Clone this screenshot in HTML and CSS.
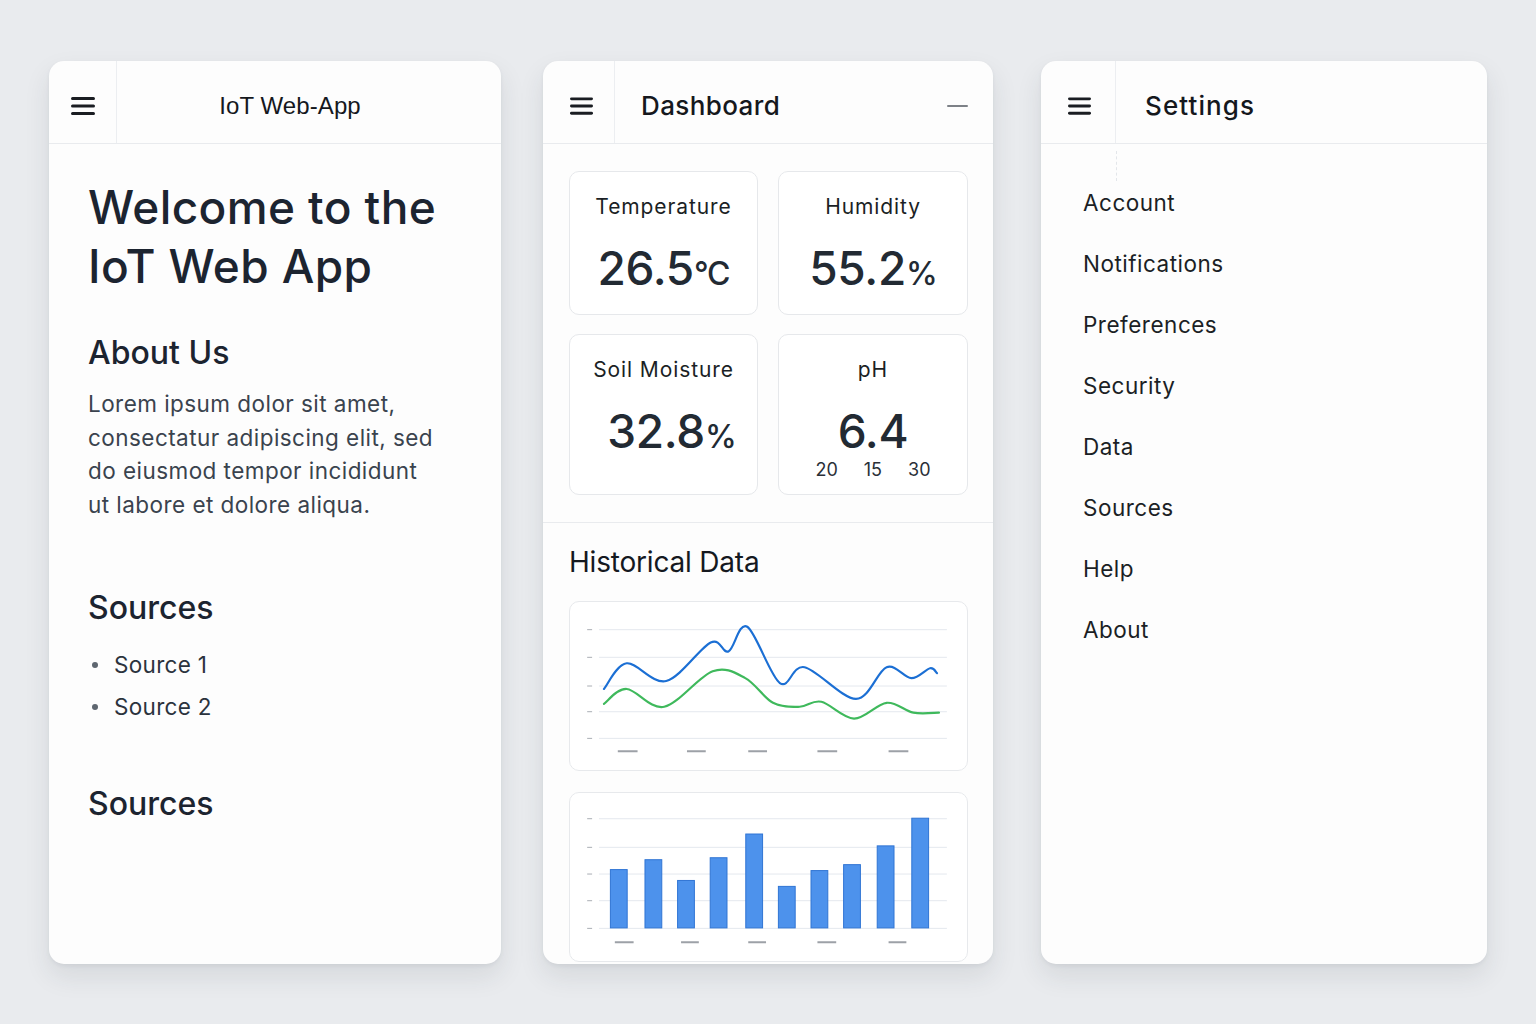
FILE: index.html
```html
<!DOCTYPE html>
<html lang="en">
<head>
<meta charset="utf-8">
<title>IoT Web-App</title>
<link rel="stylesheet" href="styles.css">
</head>
<body>
<div class="stage">

  <section class="panel panel-home">
    <header class="bar">
      <div class="menu-cell menu-cell-home">
        <svg class="burger" viewBox="0 0 24 20" width="24" height="20"><rect x="0" y="1" width="24" height="3" rx="1.5"/><rect x="0" y="8.5" width="24" height="3" rx="1.5"/><rect x="0" y="16" width="24" height="3" rx="1.5"/></svg>
      </div>
      <div class="bar-title bar-title-home">IoT Web-App</div>
    </header>
    <div class="home-body">
      <h1 class="welcome">Welcome to the<br>IoT Web App</h1>
      <h2 class="sub about">About Us</h2>
      <p class="lorem">Lorem ipsum dolor sit amet,<br>consectatur adipiscing elit, sed<br>do eiusmod tempor incididunt<br>ut labore et dolore aliqua.</p>
      <h2 class="sub sources1">Sources</h2>
      <ul class="src-list">
        <li>Source 1</li>
        <li>Source 2</li>
      </ul>
      <h2 class="sub sources2">Sources</h2>
    </div>
  </section>

  <section class="panel panel-dash">
    <header class="bar">
      <div class="menu-cell menu-cell-dash">
        <svg class="burger" viewBox="0 0 24 20" width="23" height="20"><rect x="0" y="1" width="24" height="3" rx="1.5"/><rect x="0" y="8.5" width="24" height="3" rx="1.5"/><rect x="0" y="16" width="24" height="3" rx="1.5"/></svg>
      </div>
      <div class="bar-title bar-title-dash">Dashboard</div>
      <div class="minus"></div>
    </header>
    <div class="cards">
      <div class="card">
        <div class="card-label">Temperature</div>
        <div class="card-value">26.5<span class="unit">°C</span></div>
      </div>
      <div class="card">
        <div class="card-label">Humidity</div>
        <div class="card-value">55.2<span class="unit">%</span></div>
      </div>
      <div class="card">
        <div class="card-label">Soil Moisture</div>
        <div class="card-value shift">32.8<span class="unit">%</span></div>
      </div>
      <div class="card">
        <div class="card-label">pH</div>
        <div class="card-value">6.4</div>
        <div class="card-sub"><span>20</span><span>15</span><span>30</span></div>
      </div>
    </div>
    <div class="history">
      <h3 class="history-title">Historical Data</h3>
      <div class="chart">
        <svg viewBox="0 0 400 170" width="398" height="168">
          <g class="grid">
            <line x1="28" y1="28" x2="380" y2="28"/>
            <line x1="28" y1="56" x2="380" y2="56"/>
            <line x1="28" y1="85" x2="380" y2="85"/>
            <line x1="28" y1="111" x2="380" y2="111"/>
            <line x1="28" y1="138" x2="380" y2="138"/>
          </g>
          <g class="ticks">
            <line x1="16" y1="28" x2="21" y2="28"/>
            <line x1="16" y1="56" x2="21" y2="56"/>
            <line x1="16" y1="85" x2="21" y2="85"/>
            <line x1="16" y1="111" x2="21" y2="111"/>
            <line x1="16" y1="138" x2="21" y2="138"/>
          </g>
          <g class="xlabels">
            <line x1="47" y1="151" x2="67" y2="151"/>
            <line x1="117" y1="151" x2="136" y2="151"/>
            <line x1="179" y1="151" x2="198" y2="151"/>
            <line x1="249" y1="151" x2="269" y2="151"/>
            <line x1="321" y1="151" x2="341" y2="151"/>
          </g>
          <path class="line-green" d="M33,103 C36.8,100.5 45.8,87.5 56,88 C66.2,88.5 79.5,109 94,106 C108.5,103 129.3,74.8 143,70 C156.7,65.2 165.8,71.7 176,77 C186.2,82.3 194.8,97.2 204,102 C213.2,106.8 222.8,106.2 231,106 C239.2,105.8 243.8,99 253,101 C262.2,103 275,117.8 286,118 C297,118.2 309,103 319,102 C329,101 337.2,110.3 346,112 C354.8,113.7 367.7,112 372,112"/>
          <path class="line-blue" d="M33,88 C36.8,83.7 45.5,63.3 56,62 C66.5,60.7 81.8,83.5 96,80 C110.2,76.5 130.5,46 141,41 C151.5,36 152.8,52.7 159,50 C165.2,47.3 169.3,19.7 178,25 C186.7,30.3 201.3,75.2 211,82 C220.7,88.8 223.2,63.3 236,66 C248.8,68.7 274.2,98 288,98 C301.8,98 309.7,69.5 319,66 C328.3,62.5 336.7,76.8 344,77 C351.3,77.2 358.7,67.8 363,67 C367.3,66.2 368.8,71.2 370,72"/>
        </svg>
      </div>
      <div class="chart chart-bars">
        <svg viewBox="0 0 400 170" width="398" height="168">
          <g class="grid">
            <line x1="28" y1="26" x2="380" y2="26"/>
            <line x1="28" y1="55" x2="380" y2="55"/>
            <line x1="28" y1="82" x2="380" y2="82"/>
            <line x1="28" y1="109" x2="380" y2="109"/>
            <line x1="28" y1="137" x2="380" y2="137"/>
          </g>
          <g class="ticks">
            <line x1="16" y1="26" x2="21" y2="26"/>
            <line x1="16" y1="55" x2="21" y2="55"/>
            <line x1="16" y1="82" x2="21" y2="82"/>
            <line x1="16" y1="109" x2="21" y2="109"/>
            <line x1="16" y1="137" x2="21" y2="137"/>
          </g>
          <g class="bars">
            <rect x="39.5" y="77.5" width="17" height="59"/>
            <rect x="74.5" y="67.5" width="17" height="69"/>
            <rect x="107.5" y="88.5" width="17" height="48"/>
            <rect x="140.5" y="65.5" width="17" height="71"/>
            <rect x="176.5" y="41.5" width="17" height="95"/>
            <rect x="209.5" y="94.5" width="17" height="42"/>
            <rect x="242.5" y="78.5" width="17" height="58"/>
            <rect x="275.5" y="72.5" width="17" height="64"/>
            <rect x="309.5" y="53.5" width="17" height="83"/>
            <rect x="344.5" y="25.5" width="17" height="111"/>
          </g>
          <g class="xlabels">
            <line x1="44" y1="151" x2="63" y2="151"/>
            <line x1="111" y1="151" x2="129" y2="151"/>
            <line x1="179" y1="151" x2="197" y2="151"/>
            <line x1="249" y1="151" x2="268" y2="151"/>
            <line x1="321" y1="151" x2="339" y2="151"/>
          </g>
        </svg>
      </div>
    </div>
  </section>

  <section class="panel panel-settings">
    <header class="bar">
      <div class="menu-cell menu-cell-settings">
        <svg class="burger" viewBox="0 0 24 20" width="23" height="20"><rect x="0" y="1" width="24" height="3" rx="1.5"/><rect x="0" y="8.5" width="24" height="3" rx="1.5"/><rect x="0" y="16" width="24" height="3" rx="1.5"/></svg>
      </div>
      <div class="bar-title bar-title-settings">Settings</div>
    </header>
    <ul class="settings-list">
      <li>Account</li>
      <li>Notifications</li>
      <li>Preferences</li>
      <li>Security</li>
      <li>Data</li>
      <li>Sources</li>
      <li>Help</li>
      <li>About</li>
    </ul>
  </section>

</div>
</body>
</html>
```

FILE: styles.css
```css
* { box-sizing: border-box; }

html, body {
  margin: 0;
  padding: 0;
}

body {
  width: 1536px;
  height: 1024px;
  background: #e9ebee;
  font-family: Inter, "Noto Sans", "Liberation Sans", sans-serif;
  color: #1e252e;
  overflow: hidden;
}

.stage {
  display: flex;
  align-items: flex-start;
  column-gap: 42px;
  padding: 61px 0 0 49px;
}

.panel {
  position: relative;
  height: 903px;
  background: #fdfdfd;
  border-radius: 15px;
  overflow: hidden;
  box-shadow: 0 12px 26px rgba(40, 48, 60, 0.10), 0 2px 4px rgba(40, 48, 60, 0.06);
}

.panel-home { width: 452px; }
.panel-dash { width: 450px; }
.panel-settings { width: 446px; margin-left: 6px; }

/* header bar */
.bar {
  display: flex;
  align-items: center;
  height: 83px;
  padding-top: 7px;
  border-bottom: 1px solid #e9ebee;
}

.menu-cell {
  align-self: stretch;
  margin-top: -7px;
  padding-top: 7px;
  display: flex;
  align-items: center;
  justify-content: center;
  border-right: 1px solid #eceef1;
  flex: none;
}
.menu-cell-home { width: 68px; }
.menu-cell-dash { width: 72px; padding-left: 5px; }
.menu-cell-settings { width: 75px; padding-left: 3px; }

.burger { fill: #1a1d22; display: block; }

.bar-title {
  flex: 1;
  color: #15181d;
  font-size: 26px;
  font-weight: 500;
}

.bar-title-home {
  text-align: center;
  font-size: 24px;
  font-weight: 400;
  font-family: "Liberation Sans", Arial, sans-serif;
  padding-right: 38px;
  letter-spacing: 0.1px;
}

.bar-title-dash {
  padding-left: 26px;
  letter-spacing: 0.4px;
}

.bar-title-settings {
  padding-left: 29px;
  letter-spacing: 1.1px;
}

.minus {
  width: 21px;
  height: 2px;
  background: #7d8187;
  margin-right: 25px;
  border-radius: 1px;
}

/* home panel */
.home-body {
  padding: 0 39px;
}

.welcome {
  margin: 34px 0 0;
  font-size: 46px;
  line-height: 59px;
  font-weight: 500;
  color: #1c2430;
  letter-spacing: 0.4px;
}

.sub {
  margin: 0;
  font-size: 32px;
  line-height: 40px;
  font-weight: 500;
  color: #1c2430;
}

.about { margin-top: 37px; }

.lorem {
  margin: 14px 0 0;
  font-size: 22.5px;
  line-height: 33.5px;
  color: #3a434e;
  letter-spacing: 0.45px;
}

.sources1 { margin-top: 67px; }

.src-list {
  margin: 16px 0 0;
  padding: 0 0 0 26px;
  list-style: none;
}

.src-list li {
  position: relative;
  font-size: 22.5px;
  line-height: 42px;
  color: #2b333d;
  letter-spacing: 0.3px;
}

.src-list li::before {
  content: "";
  position: absolute;
  left: -22px;
  top: 18px;
  width: 6px;
  height: 6px;
  border-radius: 50%;
  background: #5e6670;
}

.sources2 { margin-top: 56px; }

/* dashboard panel */
.cards {
  display: grid;
  grid-template-columns: 189px 190px;
  grid-template-rows: 144px 161px;
  column-gap: 20px;
  row-gap: 19px;
  padding: 27px 0 27px 26px;
  border-bottom: 1px solid #e9ebee;
}

.card {
  border: 1px solid #e6e8eb;
  border-radius: 10px;
  background: #fff;
  display: flex;
  flex-direction: column;
  align-items: center;
  padding-top: 23px;
}

.card-label {
  font-size: 21px;
  line-height: 24px;
  color: #1b1f25;
  letter-spacing: 0.9px;
}

.card-value {
  margin-top: 24px;
  font-size: 46px;
  line-height: 50px;
  font-weight: 500;
  color: #222a33;
  letter-spacing: -0.3px;
}

.card-value.shift { padding-left: 16px; }

.unit {
  font-size: 32px;
  font-weight: 500;
  letter-spacing: -1px;
}

.card-sub {
  display: flex;
  gap: 26px;
  margin-top: 3px;
  font-size: 18px;
  line-height: 22px;
  color: #2a3038;
}

.history {
  padding: 22px 25px 0 26px;
}

.history-title {
  margin: 0;
  font-size: 28px;
  line-height: 34px;
  font-weight: 400;
  color: #15191f;
  letter-spacing: -0.2px;
}

.chart {
  margin-top: 22px;
  height: 170px;
  border: 1px solid #e7e9ec;
  border-radius: 10px;
  background: #fff;
  overflow: hidden;
}

.chart svg { display: block; }

.chart-bars { margin-top: 21px; }

.grid line {
  stroke: #e4e8ee;
  stroke-width: 1;
}

.ticks line {
  stroke: #a9adb3;
  stroke-width: 1;
}

.xlabels line {
  stroke: #9da1a7;
  stroke-width: 2;
}

.line-blue {
  fill: none;
  stroke: #1b6fd4;
  stroke-width: 2.2;
  stroke-linecap: round;
}

.line-green {
  fill: none;
  stroke: #3fb95c;
  stroke-width: 2.2;
  stroke-linecap: round;
}

.bars rect {
  fill: #4d92ec;
  stroke: #2f74d3;
  stroke-width: 1;
}

/* settings panel */
.settings-list {
  list-style: none;
  margin: 0;
  padding: 28px 0 0 42px;
}

.settings-list::before {
  content: "";
  position: absolute;
  left: 75px;
  top: 90px;
  height: 30px;
  border-left: 1px dashed #e3e6ea;
}

.settings-list li {
  font-size: 22.5px;
  line-height: 61px;
  color: #1b1f25;
  letter-spacing: 0.5px;
}
```
